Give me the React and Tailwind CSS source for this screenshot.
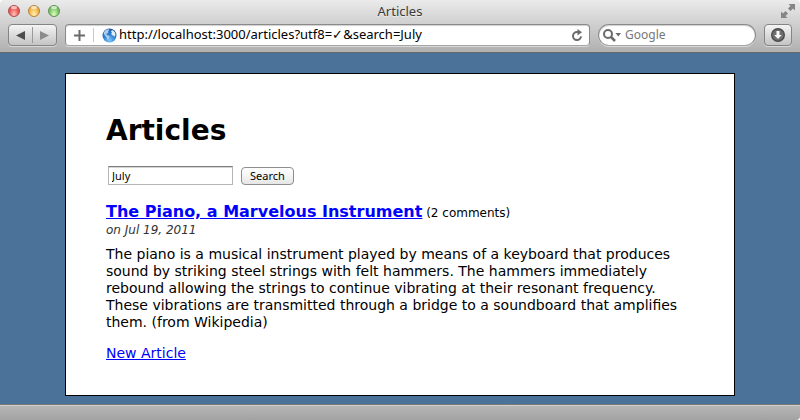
import { useState } from 'react';

const uiFont = "font-['Noto_Sans','Open_Sans',sans-serif]";
const chromeBtn = 'border border-[#858585] rounded-sm bg-linear-to-b from-[#f4f4f4] to-[#c4c4c4] shadow-[0_1px_0_#d8d8d8]';
const chromeField = 'flex items-center min-w-0 h-[22px] border border-[#8a8a8a] border-b-[#a5a5a5] bg-white shadow-[inset_0_1px_1px_#d0d0d0,0_1px_0_#d8d8d8]';

const lights = [
  { label: 'Close', cls: 'border-[#b04a48] bg-radial-[at_50%_85%] from-[#ffc4be] via-[#f26a66] to-[#cf4040]' },
  { label: 'Minimize', cls: 'border-[#b58238] bg-radial-[at_50%_85%] from-[#fff6b4] via-[#f9c05a] to-[#dc9530]' },
  { label: 'Zoom', cls: 'border-[#5d9150] bg-radial-[at_50%_85%] from-[#e2ffc4] via-[#8dd077] to-[#5aa54c]' },
];

function TitleBar() {
  return (
    <div className="grid grid-cols-3 items-start h-6 px-2">
      <div className="flex gap-2 pt-[5px]">
        {lights.map(({ label, cls }) => (
          <button key={label} type="button" aria-label={label} className={`relative w-3 h-3 rounded-full border ${cls}`}>
            <span className="absolute top-0 left-[2px] w-1.5 h-[3px] rounded-full bg-white/60" />
          </button>
        ))}
      </div>
      <div className="text-center text-[13px] leading-[22px] text-[#3a3a3a] [text-shadow:0_1px_0_#ffffff80]">Articles</div>
      <button type="button" aria-label="Full screen" className="justify-self-end pt-[3px] -mr-1">
        <svg className="w-4 h-4" viewBox="0 0 16 16" fill="#858585">
          <path d="M8.500 1H15v6.500l-2-2L10.500 8 8 5.500 10.500 3z" />
          <path d="M7.500 15H1V8.500l2 2L5.500 8 8 10.500 5.500 13z" />
        </svg>
      </button>
    </div>
  );
}

function Toolbar() {
  const [url, setUrl] = useState('http://localhost:3000/articles?utf8=✓&search=July');
  const [query, setQuery] = useState('');

  return (
    <div className="flex gap-2 px-2 pb-1.5">
      <div className={`flex items-center w-[49px] h-[22px] shrink-0 ${chromeBtn}`}>
        <button type="button" aria-label="Back" className="flex-1 flex justify-center">
          <svg className="w-[9px] h-[9px]" viewBox="0 0 9 9"><path d="M9 0v9L0 4.500z" fill="#4c4c4c" /></svg>
        </button>
        <span className="w-px h-4 bg-[#9a9a9a]" />
        <button type="button" aria-label="Forward" className="flex-1 flex justify-center">
          <svg className="w-[9px] h-[9px]" viewBox="0 0 9 9"><path d="M0 0v9l9-4.500z" fill="#8b8b8b" /></svg>
        </button>
      </div>

      <div className={`flex-1 rounded-sm pl-2 pr-1.5 ${chromeField}`}>
        <button type="button" aria-label="Add bookmark">
          <svg className="w-[11px] h-[11px]" viewBox="0 0 11 11" stroke="#6b6b6b" strokeWidth="2"><path d="M5.500 0v11M0 5.500h11" /></svg>
        </button>
        <span className="w-px h-3.5 ml-2 mr-2 bg-[#c8c8c8]" />
        <svg className="w-[15px] h-[15px] shrink-0" viewBox="0 0 15 15">
          <defs>
            <radialGradient id="globe" cx=".5" cy=".85" r=".85">
              <stop offset="0" stopColor="#7cc8f8" />
              <stop offset=".5" stopColor="#2f80d4" />
              <stop offset="1" stopColor="#1d4f9f" />
            </radialGradient>
          </defs>
          <circle cx="7.500" cy="7.500" r="7" fill="url(#globe)" />
          <path d="M1.500 5C2.500 2.500 4.500 1.200 6.500 1.200l1 .8L6.200 3.200l.3 1L5.300 5.500l-1 .3.7 1.400 2 .6.700 1.200-1 1.600-.9 1.700-1-1.700L4.600 9.300 2.800 7.400z" fill="#a9cff0" />
          <path d="M8.800 3l2-.7 2 2 .7 2.500-.9 2-1.200-1.300-1.400-.3-.8-1.600.7-1z" fill="#e2f0fb" />
        </svg>
        <input
          type="text"
          aria-label="Address"
          value={url}
          onChange={(e) => setUrl(e.target.value)}
          className="flex-1 min-w-0 ml-0.5 text-[13px] text-black bg-transparent outline-none"
        />
        <button type="button" aria-label="Reload">
          <svg className="w-3 h-3" viewBox="0 0 12 12" fill="none">
            <path d="M7.500 3H6A4 4 0 1 0 10 7.300" stroke="#6a6a6a" strokeWidth="2" />
            <path d="M6.500 0l4.500 3.300-4.500 3.200z" fill="#6a6a6a" />
          </svg>
        </button>
      </div>

      <div className={`w-[158px] shrink-0 rounded-full px-1 ${chromeField}`}>
        <svg className="w-[18px] h-[13px] shrink-0" viewBox="0 0 18 13" fill="none">
          <circle cx="5" cy="5" r="4" stroke="#6a6a6a" strokeWidth="2" />
          <path d="M8 8l4 4" stroke="#6a6a6a" strokeWidth="2.500" />
          <path d="M12.500 4h5.500l-2.750 3.500z" fill="#6a6a6a" />
        </svg>
        <input
          type="text"
          aria-label="Web search"
          placeholder="Google"
          value={query}
          onChange={(e) => setQuery(e.target.value)}
          className="flex-1 min-w-0 ml-1 text-xs text-black placeholder-[#777777] bg-transparent outline-none"
        />
      </div>

      <button type="button" aria-label="Downloads" className={`flex items-center justify-center w-7 h-[22px] shrink-0 ${chromeBtn}`}>
        <svg className="w-3.5 h-3.5" viewBox="0 0 14 14">
          <circle cx="7" cy="7" r="6.300" fill="#6e6e6e" stroke="#4a4a4a" strokeWidth="1.400" />
          <path d="M5.500 3h3v4h2.300L7 11 3.200 7h2.300z" fill="#f8f8f8" />
        </svg>
      </button>
    </div>
  );
}

function SearchForm() {
  const [search, setSearch] = useState('July');

  return (
    <form onSubmit={(e) => e.preventDefault()} className={`flex items-center gap-2 mt-[18px] pl-0.5 text-[11px] ${uiFont}`}>
      <input
        type="text"
        aria-label="Search articles"
        value={search}
        onChange={(e) => setSearch(e.target.value)}
        className="w-[125px] h-[19px] px-[3px] text-black bg-white border border-[#b5b5b5] border-t-[#7e7e7e] shadow-[inset_0_1px_0_#d5d5d5] outline-none"
      />
      <button type="submit" className="h-[18px] px-2 leading-4 text-black border border-[#8e8e8e] rounded-sm bg-linear-to-b from-white via-[#f4f4f4] to-[#e6e6e6]">
        Search
      </button>
    </form>
  );
}

export default function App() {
  return (
    <div className="min-h-screen flex flex-col bg-white">
      <header className={`rounded-t-sm border-b border-[#6a6a6a] bg-linear-to-b from-[#ebebeb] to-[#b0b0b0] ${uiFont}`}>
        <TitleBar />
        <Toolbar />
      </header>

      <main className="flex-1 px-4 pt-5 pb-2 bg-[#4b7399] font-['DejaVu_Sans',Verdana,sans-serif] text-black">
        <div className="w-full max-w-[670px] mx-auto px-10 pt-10 pb-[33px] bg-white border border-black">
          <h1 className="text-[28px] leading-[34px] font-bold">Articles</h1>
          <SearchForm />
          <article className="mt-[17px]">
            <div className="text-xs leading-5">
              <h2 className="inline text-base leading-5 font-bold">
                <a href="#article" className="text-[#0000ff] underline">The Piano, a Marvelous Instrument</a>
              </h2>{' '}
              (2 comments)
            </div>
            <div className="text-xs leading-[14px] italic text-[#333333]">on Jul 19, 2011</div>
            <p className="mt-[9px] text-sm leading-[17px]">
              The piano is a musical instrument played by means of a keyboard that produces sound by striking
              steel strings with felt hammers. The hammers immediately rebound allowing the strings to continue
              vibrating at their resonant frequency. These vibrations are transmitted through a bridge to a
              soundboard that amplifies them. (from Wikipedia)
            </p>
          </article>
          <p className="mt-3.5 text-sm leading-[17px]">
            <a href="#new" className="text-[#0000ff] underline">New Article</a>
          </p>
        </div>
      </main>

      <footer className="h-4 rounded-br-sm border-t border-[#777777] bg-linear-to-b from-[#b8b8b8] to-[#a2a2a2] shadow-[inset_0_1px_0_#d0d0d0]" />
    </div>
  );
}
